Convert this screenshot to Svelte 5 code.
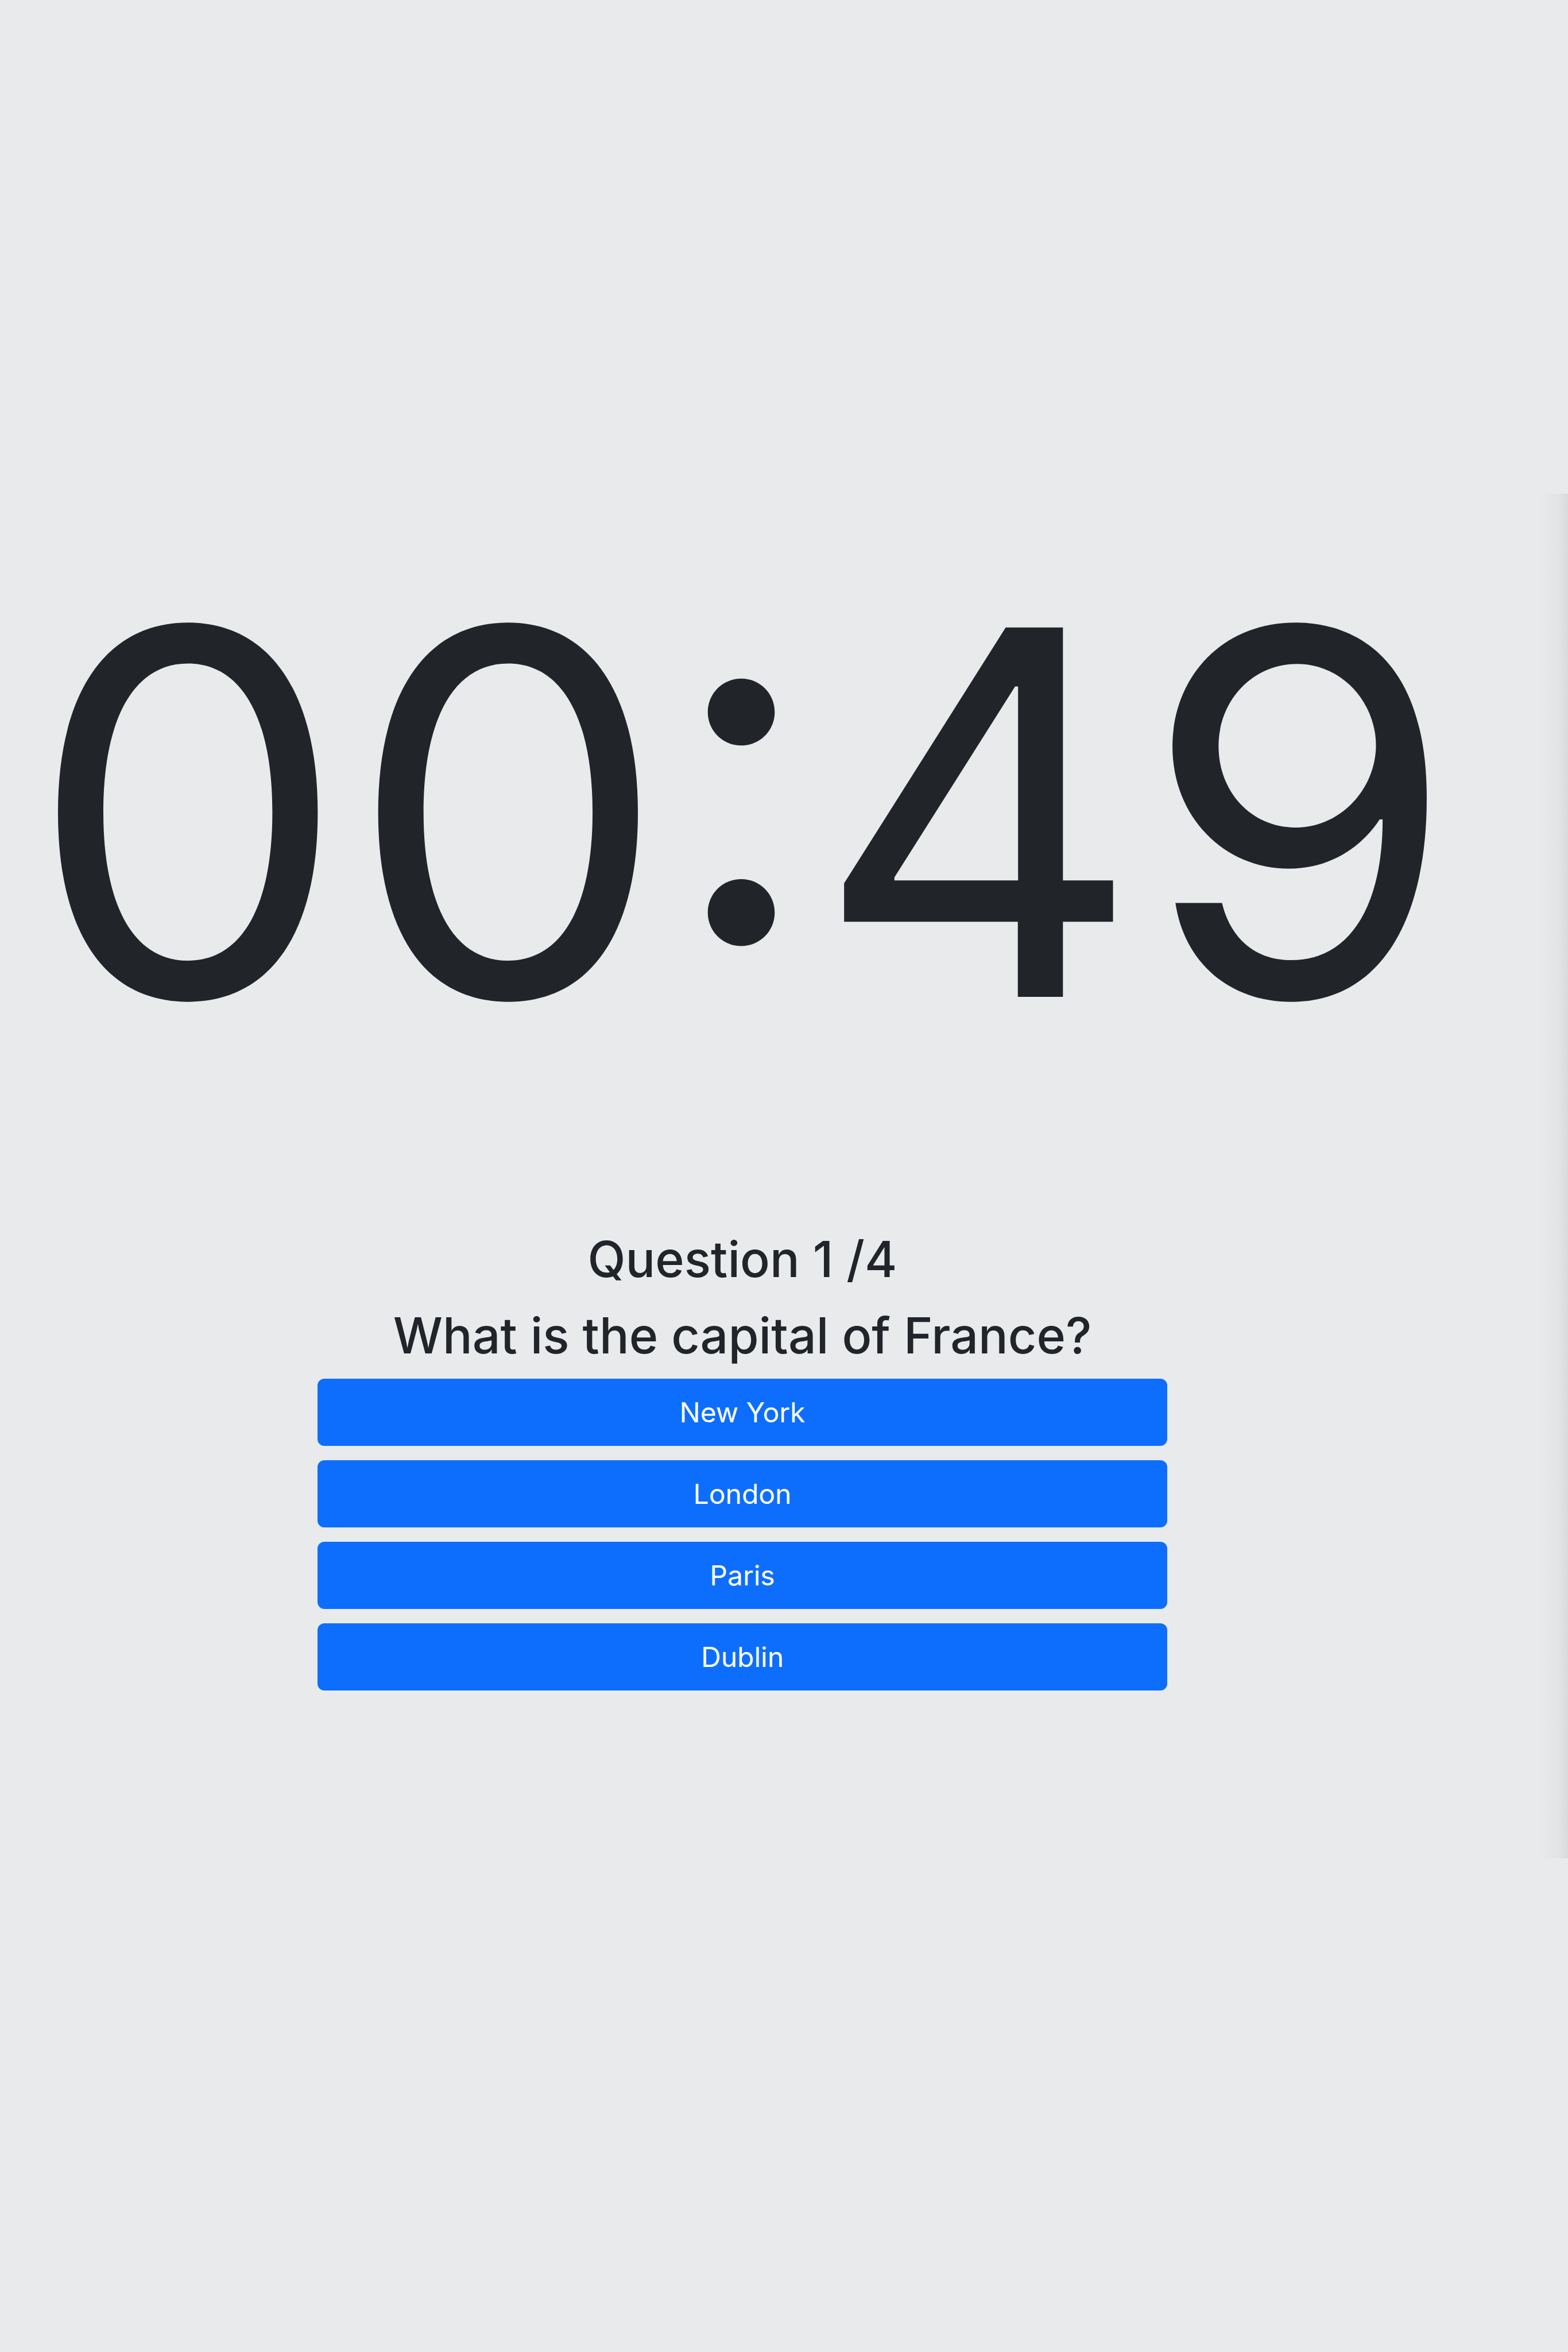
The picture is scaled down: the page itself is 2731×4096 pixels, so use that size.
<script>
  let secondsLeft = $state(49);
  let current = $state(0);

  const total = 4;
  const questions = [
    {
      text: 'What is the capital of France?',
      answers: ['New York', 'London', 'Paris', 'Dublin']
    }
  ];

  const pad = (n) => String(n).padStart(2, '0');
  const clock = $derived(`${pad(Math.floor(secondsLeft / 60))}:${pad(secondsLeft % 60)}`);
  const question = $derived(questions[current]);
</script>

<main class="page">
  <section class="quiz">
    <div class="content">
      <time class="timer">{clock}</time>
      <header class="heading">
        <h1>Question {current + 1} /{total}</h1>
        <h2>{question.text}</h2>
      </header>
      <div class="answers">
        {#each question.answers as answer}
          <button type="button">{answer}</button>
        {/each}
      </div>
    </div>
    <div class="edge"></div>
  </section>
</main>

<style>
  :global(body) {
    background: #e8eaec;
  }

  .page {
    display: flex;
    flex-direction: column;
    justify-content: center;
    min-height: 100vh;
    overflow: hidden;
    color: #212529;
    font-family: Inter, 'Liberation Sans', sans-serif;
  }

  .quiz {
    display: flex;
  }

  .content {
    flex: 1;
    min-width: 0;
    display: flex;
    flex-direction: column;
    align-items: center;
    padding: 0 97px 292px 0;
  }

  .timer {
    margin-bottom: 169px;
    font-size: 884px;
    line-height: 1110px;
    white-space: nowrap;
  }

  .heading {
    display: grid;
    gap: 24px;
    margin-bottom: 20px;
    text-align: center;
  }

  h1,
  h2 {
    margin: 0;
    font-size: 86px;
    font-weight: 500;
    line-height: 109px;
  }

  .answers {
    display: grid;
    gap: 25px;
    width: 57.2%;
  }

  button {
    padding: 20px;
    border: 0;
    border-radius: 12px;
    background: #0d6efd;
    color: #fff;
    font-family: inherit;
    font-size: 48px;
    line-height: 77px;
    cursor: pointer;
  }

  /* Soft shade along the right side of the panel */
  .edge {
    width: 48px;
    background: linear-gradient(to right, #e8eaeb, #e1e3e4 70%, #d9dad9);
  }
</style>
